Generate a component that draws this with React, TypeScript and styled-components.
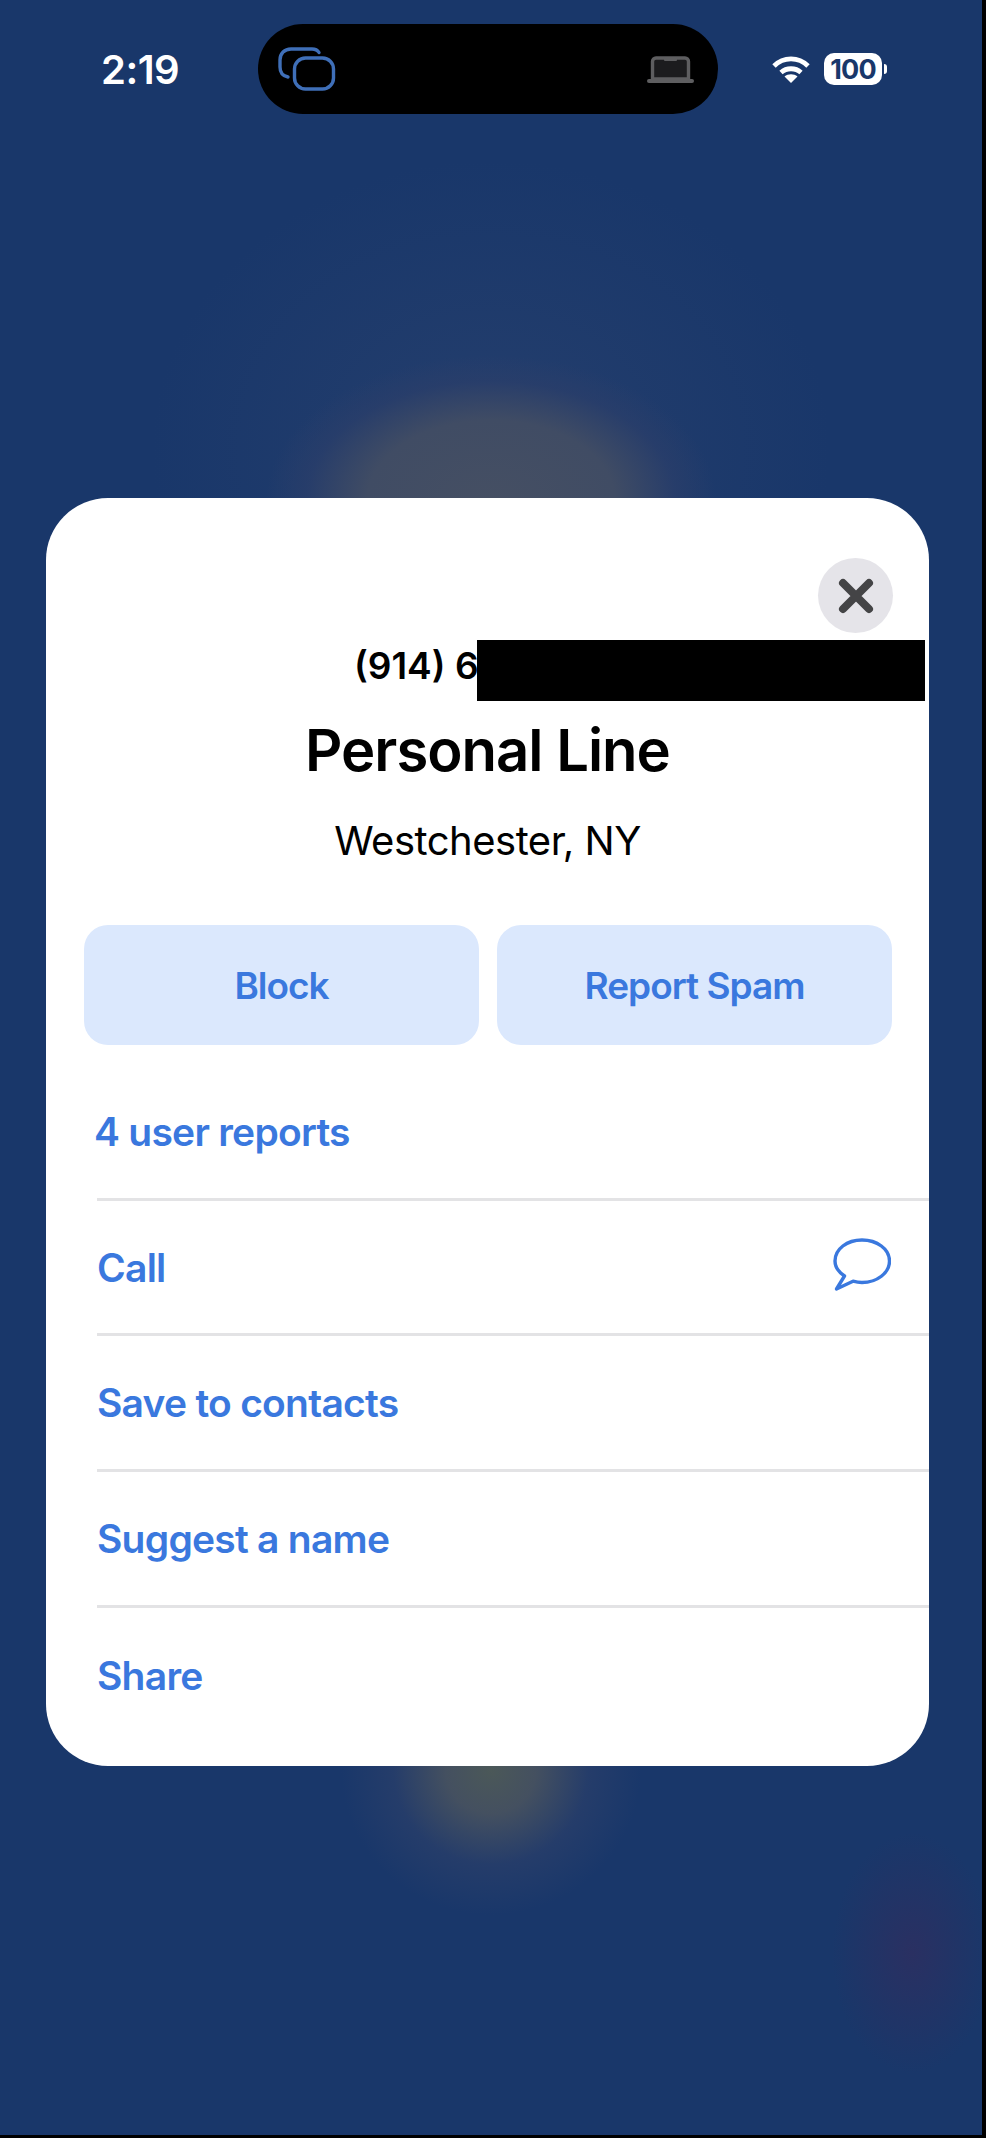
import * as React from 'react';
import styled, { createGlobalStyle } from 'styled-components';

const GlobalStyle = createGlobalStyle`
    html, body {
        margin: 0;
        padding: 0;
        background: #000;
    }
`;

const Screen = styled.div`
    position: relative;
    box-sizing: border-box;
    width: 982px;
    height: 2135px;
    overflow: hidden;
    font-family: Inter, "Liberation Sans", sans-serif;
    background-color: #19376a;
    background-image:
        radial-gradient(ellipse 225px 145px at 491px 500px, #454f63 0%, #404c64 55%, rgba(42, 62, 106, 0.75) 82%, rgba(25, 55, 106, 0) 100%),
        radial-gradient(ellipse 340px 290px at 491px 450px, rgba(48, 70, 112, 0.5) 0%, rgba(25, 55, 106, 0) 100%),
        radial-gradient(ellipse 150px 145px at 491px 1770px, #4b5858 0%, #445060 30%, rgba(40, 62, 106, 0.8) 65%, rgba(25, 55, 106, 0) 100%),
        radial-gradient(ellipse 80px 120px at 912px 1953px, #2a3062 0%, rgba(25, 55, 106, 0) 100%);
`;

const StatusBar = styled.div`
    display: flex;
    align-items: center;
    height: 90px;
    padding: 24px 0 0 101px;
    color: #fff;
`;

const Clock = styled.div`
    width: 157px;
    font-size: 40px;
    font-weight: 600;
    letter-spacing: -0.5px;
`;

const Island = styled.div`
    display: flex;
    align-items: center;
    justify-content: space-between;
    box-sizing: border-box;
    width: 460px;
    height: 90px;
    padding: 0 24px 0 20px;
    border-radius: 45px;
    background: #000;
`;

const StatusIcons = styled.div`
    display: flex;
    align-items: center;
    gap: 14px;
    margin-left: 54px;
`;

const BatteryBody = styled.div`
    display: flex;
    align-items: center;
    justify-content: center;
    width: 58px;
    height: 32px;
    border-radius: 10px;
    background: #fff;
    color: #19376a;
    font-size: 27px;
    font-weight: 700;
    letter-spacing: -0.8px;
`;

const BatteryCap = styled.div`
    width: 3px;
    height: 10px;
    margin-left: -12px;
    border-radius: 0 4px 4px 0;
    background: #fff;
`;

const Card = styled.div`
    position: relative;
    box-sizing: border-box;
    width: 883px;
    height: 1268px;
    margin: 384px 0 0 46px;
    padding-top: 137px;
    border-radius: 62px;
    background: #fff;
`;

const CloseButton = styled.div`
    position: absolute;
    top: 60px;
    right: 36px;
    display: flex;
    align-items: center;
    justify-content: center;
    width: 75px;
    height: 75px;
    border-radius: 50%;
    background: #e5e4e9;
`;

const Redaction = styled.div`
    position: absolute;
    top: 142px;
    left: 431px;
    width: 448px;
    height: 61px;
    background: #000;
`;

const PhoneNumber = styled.div`
    height: 62px;
    padding-left: 308px;
    color: #000;
    font-size: 37px;
    font-weight: 600;
    line-height: 62px;
`;

const Title = styled.h1`
    margin: 17px 0 0;
    color: #000;
    font-size: 58px;
    font-weight: 600;
    line-height: 72px;
    text-align: center;
    letter-spacing: -1px;
`;

const Location = styled.div`
    margin-top: 30px;
    color: #000;
    font-size: 40px;
    font-weight: 400;
    line-height: 50px;
    text-align: center;
    letter-spacing: -0.5px;
`;

const Actions = styled.div`
    display: grid;
    grid-template-columns: 395px 395px;
    gap: 18px;
    margin: 59px 37px 0 38px;
`;

const ActionButton = styled.div`
    display: flex;
    align-items: center;
    justify-content: center;
    height: 120px;
    border-radius: 24px;
    background: #dbe8fd;
    color: #3a78de;
    font-size: 37px;
    font-weight: 600;
    letter-spacing: -1px;
`;

const List = styled.div`
    margin: 20px 0 0 51px;
`;

const Row = styled.div<{ $last?: boolean; $flushLeft?: boolean }>`
    display: flex;
    align-items: center;
    justify-content: space-between;
    box-sizing: border-box;
    height: 135.7px;
    padding-right: 38px;
    border-bottom: ${p => (p.$last ? 'none' : '3px solid #e3e3e5')};
    color: #3a78de;
    font-size: 39px;
    font-weight: 600;
    letter-spacing: -0.75px;
    text-indent: ${p => (p.$flushLeft ? '-3px' : '0')};
`;

const ChatIcon = styled.svg`
    margin-bottom: 5px;
`;

const rows = ['Call', 'Save to contacts', 'Suggest a name', 'Share'];

const App: React.FC = () => {
    return <Screen>
        <GlobalStyle />
        <StatusBar>
            <Clock>2:19</Clock>
            <Island>
                <svg width="58" height="44" viewBox="0 0 58 44" fill="none" stroke="#3f6fb8" strokeWidth="3.4">
                    <path d="M41 5.500C39.500 3 37.500 2 34 2H13C6.500 2 2 6.500 2 13V20C2 25.500 4.500 29 10 30" strokeLinecap="round" />
                    <rect x="16.500" y="11" width="39" height="31" rx="11" />
                </svg>
                <svg width="47" height="27" viewBox="0 0 47 27">
                    <path d="M9 2H38C40 2 41.500 3.500 41.500 5.500V23H5.500V5.500C5.500 3.500 7 2 9 2Z" fill="#1c1c1e" stroke="#5e5e60" strokeWidth="3.4" />
                    <rect x="17" y="1" width="13" height="4" rx="1" fill="#5e5e60" />
                    <rect x="0" y="23" width="47" height="4" rx="2" fill="#5e5e60" />
                </svg>
            </Island>
            <StatusIcons>
                <svg width="38" height="27" viewBox="0 0 38 27" fill="none" stroke="#fff" strokeWidth="4.8">
                    <path d="M2 10C11.500 0.500 26.500 0.500 36 10" />
                    <path d="M9 16.500C14.500 11.500 23.500 11.500 29 16.500" />
                    <path d="M19 27L12.500 20.500C16 17.500 22 17.500 25.500 20.500Z" fill="#fff" stroke="none" />
                </svg>
                <BatteryBody>100</BatteryBody>
                <BatteryCap />
            </StatusIcons>
        </StatusBar>
        <Card>
            <CloseButton>
                <svg width="36" height="36" viewBox="0 0 36 36" stroke="#444446" strokeWidth="8" strokeLinecap="round">
                    <path d="M5 5L31 31M31 5L5 31" />
                </svg>
            </CloseButton>
            <PhoneNumber>(914) 6</PhoneNumber>
            <Redaction />
            <Title>Personal Line</Title>
            <Location>Westchester, NY</Location>
            <Actions>
                <ActionButton>Block</ActionButton>
                <ActionButton>Report Spam</ActionButton>
            </Actions>
            <List>
                <Row $flushLeft>4 user reports</Row>
                {rows.map((label, i) => (
                    <Row key={label} $last={i === rows.length - 1}>
                        {label}
                        {label === 'Call' && (
                            <ChatIcon width="58" height="53" viewBox="0 0 58 53" fill="none" stroke="#3a78de" strokeWidth="3.4" strokeLinejoin="round">
                                <path d="M29 2C44 2 56.500 11 56.500 23C56.500 35 44 44.500 29 44.500C26 44.500 23 44 20 43.200L3.500 51L11.500 38C5.500 34 2 29 2 23C2 11 14 2 29 2Z" />
                            </ChatIcon>
                        )}
                    </Row>
                ))}
            </List>
        </Card>
    </Screen>;
};

export default App;
